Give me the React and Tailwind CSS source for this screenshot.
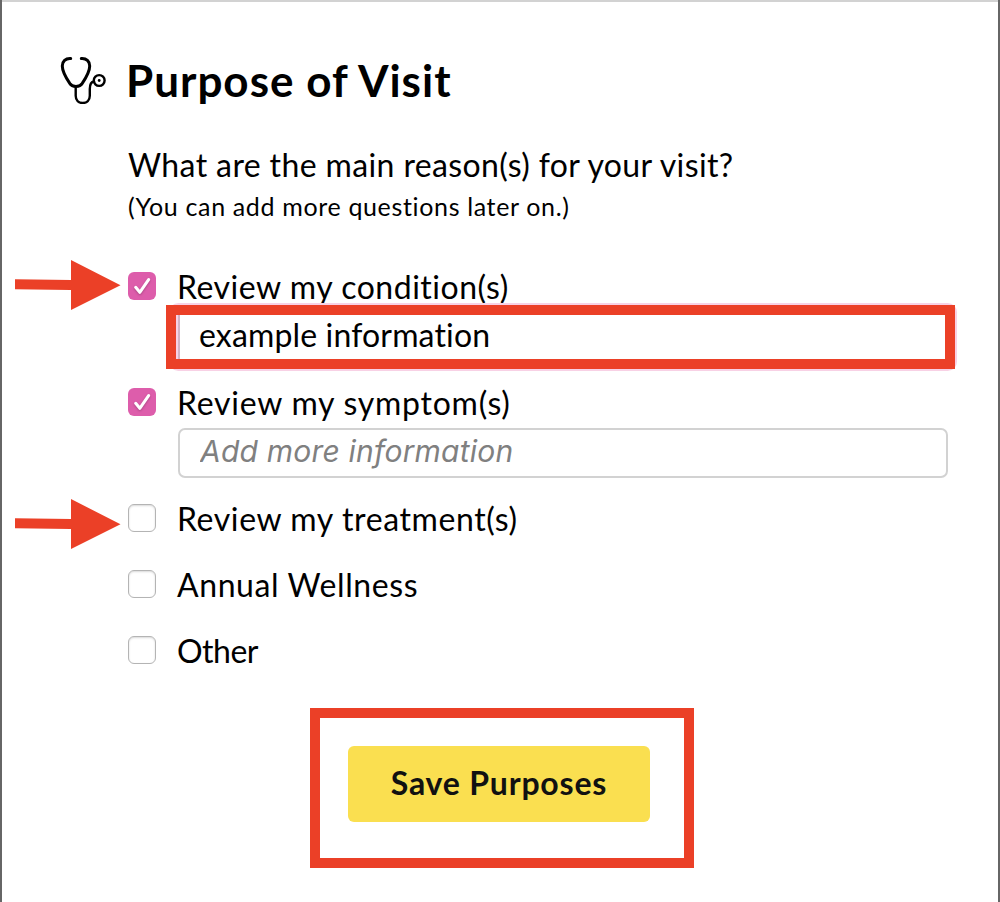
import React, { useState } from "react";
import clsx from "clsx";

const PURPOSES = [
  { id: "condition", label: "Review my condition(s)", spacing: "tracking-[0.52px]", hasInput: true },
  { id: "symptom", label: "Review my symptom(s)", spacing: "tracking-[0.75px]", hasInput: true },
  { id: "treatment", label: "Review my treatment(s)", spacing: "tracking-[0.6px]" },
  { id: "wellness", label: "Annual Wellness", spacing: "tracking-[0.6px]" },
  { id: "other", label: "Other", spacing: "tracking-[-0.5px]" },
];

function Stethoscope() {
  return (
    <svg className="w-12 h-12 shrink-0" viewBox="60 56 48 48" fill="none" stroke="#000" strokeLinecap="round">
      <path
        strokeWidth="3"
        d="M70.7 58.6C65.5 58.2 62.3 61.5 62.3 66C62.3 70 66.5 78.5 69.6 83.2C71 85.5 73 86.4 76 86.4C79 86.4 81 85.5 82.4 83.2C85.5 78.5 89.7 70 89.7 66C89.7 61.5 86.5 58.2 81.3 58.6"
      />
      <path strokeWidth="2.4" d="M75.7 87.5V95.8C75.7 100.5 78.6 103 82.7 103C86.8 103 89.8 100.5 89.8 95.8V89C89.8 84.5 91 82 94 81.5" />
      <circle cx="99.2" cy="80.5" r="5.4" strokeWidth="2.4" />
      <circle cx="99.2" cy="80.5" r="1.4" fill="#000" stroke="none" />
    </svg>
  );
}

function Checkbox({ checked, onChange }) {
  return (
    <span
      className={clsx(
        "relative flex w-7 h-7 shrink-0 rounded-[6px]",
        checked
          ? "bg-[#dd5dab]"
          : "bg-white border border-[#b4b4b4] shadow-[inset_0_1px_2px_rgba(0,0,0,0.15)]"
      )}
    >
      <input type="checkbox" className="absolute inset-0 opacity-0" checked={checked} onChange={onChange} />
      {checked && (
        <svg className="w-7 h-7 drop-shadow-[0_1px_1px_rgba(0,0,0,0.25)]" viewBox="0 0 28 28" fill="none">
          <path d="M7.7 15.3L11.8 20.3L20.6 7.6" stroke="#fff" strokeWidth="3" strokeLinecap="round" strokeLinejoin="round" />
        </svg>
      )}
    </span>
  );
}

function Arrow({ className }) {
  return (
    <svg className={clsx("absolute w-[108px] h-[50px]", className)} viewBox="0 0 108 50" fill="#eb4027">
      <path d="M0 19.3L56 20V0L105.5 25.3L56 50V30L0 29.3Z" />
    </svg>
  );
}

export default function App() {
  const [checked, setChecked] = useState({ condition: true, symptom: true });
  const [details, setDetails] = useState({ condition: "example information", symptom: "" });

  return (
    <div className="relative w-[1000px] h-[902px] overflow-hidden bg-white text-black border-x-2 border-x-[#666] font-['Lato',sans-serif]">
      <div className="h-0.5 bg-[#d2d2d2]" />

      {/* Heading */}
      <div className="flex items-center h-12 mt-[54px] pl-[58px]">
        <Stethoscope />
        <h1 className="ml-[18px] text-[44px] leading-[48px] font-bold tracking-[1px] whitespace-nowrap">
          Purpose of Visit
        </h1>
      </div>

      <div className="pl-[126px] pr-[50px]">
        <p className="mt-[39px] text-[32px] leading-[44px] tracking-[0.38px] whitespace-nowrap">
          What are the main reason(s) for your visit?
        </p>
        <p className="mt-[2px] text-[25px] leading-[34px] tracking-[0.65px] whitespace-nowrap">
          (You can add more questions later on.)
        </p>

        {/* Purposes */}
        <div className="mt-[43px]">
          {PURPOSES.map((p) => (
            <div key={p.id} className="flex flex-col gap-1.5 mb-5">
              <label className={clsx("flex items-center h-10", !p.hasInput && "mb-1.5")}>
                <Checkbox
                  checked={!!checked[p.id]}
                  onChange={() => setChecked({ ...checked, [p.id]: !checked[p.id] })}
                />
                <span className={clsx("ml-[21px] pt-0.5 text-[32px] leading-9 whitespace-nowrap", p.spacing)}>
                  {p.label}
                </span>
              </label>
              {p.hasInput && checked[p.id] && (
                <input
                  type="text"
                  placeholder="Add more information"
                  value={details[p.id]}
                  onChange={(e) => setDetails({ ...details, [p.id]: e.target.value })}
                  className={clsx(
                    "block w-[770px] h-[50px] ml-[50px] border-2 outline-none placeholder:italic placeholder:text-[#808080]",
                    p.id === "condition"
                      ? "pl-[19px] pb-1.5 rounded-[3px] border-[#d2b4c5] shadow-[0_0_0_9px_#f8d1e5] text-[32px] tracking-[0.15px]"
                      : "pl-5 pb-1 rounded-[7px] border-[#d2d2d2] font-['Inter',sans-serif] text-[30px] tracking-[0.2px]"
                  )}
                />
              )}
            </div>
          ))}
        </div>
      </div>

      <div className="w-96 h-40 mt-8 ml-[308px] border-[10px] border-[#eb4027] pt-7 pl-7">
        <button className="block w-[302px] h-[76px] pb-0.5 rounded-[6px] bg-[#fadf50] text-[#111] text-[32px] font-bold tracking-[0.8px] whitespace-nowrap">
          Save Purposes
        </button>
      </div>

      {/* Callouts */}
      <div className="absolute left-[164px] top-[305px] w-[789px] h-16 border-[10px] border-[#eb4027] pointer-events-none" />
      <Arrow className="left-[13px] top-[260px]" />
      <Arrow className="left-[13px] top-[499px]" />
    </div>
  );
}
